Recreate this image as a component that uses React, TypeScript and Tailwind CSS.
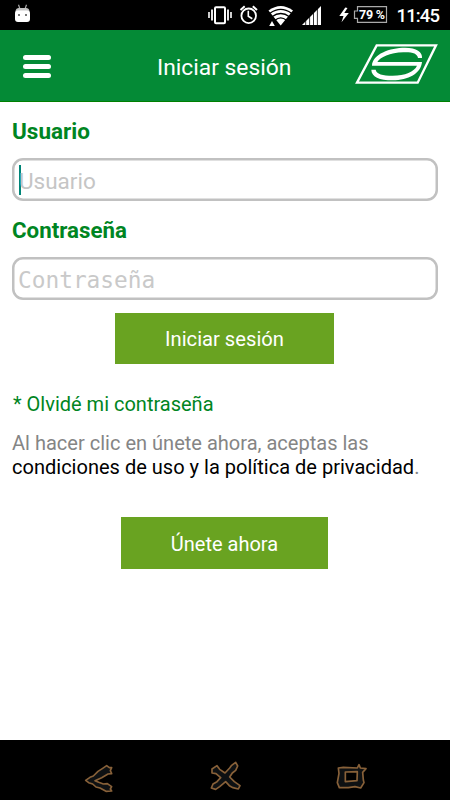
import React from 'react';

function StatusBar() {
  return (
    <div className="flex h-[30px] w-full bg-black">
      <svg width="450" height="30" viewBox="0 0 450 30" fill="none">
        <g fill="#fff">
          <path d="M18.5 4.8l1.4 4M26.5 4.8l-1.4 4" stroke="#aaa" strokeWidth="1.2" />
          <path d="M15.5 13V11Q16 8 19 8h7q3 0 3.5 3v2z" fill="#c4c4c4" />
          <rect x="15" y="10.5" width="15" height="11.5" rx="3" />
          <rect x="18" y="14" width="2" height="2" fill="#777" />
          <rect x="25" y="14" width="2" height="2" fill="#777" />
        </g>
        <g stroke="#fff">
          <rect x="215" y="7.2" width="10" height="16" rx="1" strokeWidth="2" />
          <path d="M212 9.5v11M228 9.5v11" strokeWidth="1.8" />
          <path d="M209 12v6M231 12v6" strokeWidth="1.6" />
          <circle cx="248.7" cy="15.8" r="7.3" strokeWidth="1.8" />
          <path d="M248.3 10.8v5.5l4 2.5" strokeWidth="1.6" />
          <path d="M240.5 10l4.2-3.8M257 10l-4.2-3.8" strokeWidth="2" />
        </g>
        <path d="M268.5 10.5Q280.7 1.5 293 10.5L280.7 25.5z" fill="#fff" />
        <path d="M270 13.3Q280.7 5.5 291.5 13.3M272 16.8Q280.7 10.2 289.5 16.8M275 20.3Q280.7 15.6 286.5 20.3" stroke="#000" strokeWidth="1.3" />
        <path d="M268 27v-6h6.5v6z" fill="#000" />
        <path d="M269.2 26l2.8-5 2.8 5z" fill="#fff" />
        <path d="M302 25L321 6v19z" fill="#fff" />
        <path d="M305.7 17v9M309.6 13v13M313.5 9v17M317.4 6v20" stroke="#000" strokeWidth="0.8" />
        <path d="M345.3 7.5L339.3 16h4.2l-2 6.3 7.3-9.3h-4.5l3.2-5z" fill="#fff" />
        <path d="M357.5 6.7h29v15.6h-29v-4h-3v-7.3h3z" stroke="#aaa" strokeWidth="1.2" />
        <text x="359" y="19" fill="#fff" fontFamily="Roboto, sans-serif" fontSize="12.5" fontWeight="700" textLength="26">79 %</text>
        <text x="396.5" y="22" fill="#fff" fontFamily="Roboto, sans-serif" fontSize="18.5" fontWeight="500" textLength="43.5">11:45</text>
      </svg>
    </div>
  );
}

function Logo() {
  return (
    <svg width="110" height="72" viewBox="0 0 330 216" fill="none">
      <path d="M110 46H288L233 158H51z" stroke="#fff" strokeWidth="7" />
      <path
        d="M96 107C97 72 150 53 195 53C230 53 248 66 246 84H234C232 71 218 66 190 67C150 68 120 82 112 96H246C243 130 205 151 158 151C118 151 94 140 94 119H107C109 132 128 137 158 137C195 137 223 125 231 107Z"
        fill="#fff"
      />
    </svg>
  );
}

function Header() {
  return (
    <header className="flex h-[72px] w-full items-start border-b border-[#008000] bg-[#048a36]">
      <div className="ml-[23px] mt-[25px] flex w-7 flex-col gap-1">
        <i className="h-[5px] rounded-full bg-white" />
        <i className="h-[5px] rounded-full bg-white" />
        <i className="h-[5px] rounded-full bg-white" />
      </div>
      <h1 className="ml-[106px] mt-[23px] w-[183px] whitespace-nowrap text-[22.8px] leading-[30px] text-white">Iniciar sesión</h1>
      <Logo />
    </header>
  );
}

function NavBar() {
  return (
    <nav className="h-[60px] w-full bg-black">
      <svg width="450" height="60" viewBox="0 0 1350 180" fill="#0e1113" stroke="#886139" strokeWidth="5" strokeLinejoin="round">
        <path transform="translate(210 0)" d="M47 121L60 112L70 108L84 94L98 85L110 77L118 83L125 83L121 92L125 101L114 102L95 113L75 122L86 127L100 132L112 131L125 140L121 147L125 153L108 154L90 144L78 141L68 132L56 128Z" />
        <path transform="translate(585 0)" d="M51 87L66 77L74 88L90 99L104 84L110 76L122 67L128 78L122 91L112 99L104 111L118 125L135 137L130 147L114 143L103 137L92 125L74 140L62 148L49 144L54 132L66 125L77 113L63 101L51 99Z" />
        <path transform="translate(960 0)" d="M55 84L70 82L112 84L117 74L121 84L138 86L128 97L130 120L132 128L122 144L105 140L85 143L58 143L52 128L57 100Z" />
        <path transform="translate(960 0)" d="M76 96L112 95L111 122L76 125Z" fill="#000" />
      </svg>
    </nav>
  );
}

export default function App() {
  return (
    <div className="flex h-[800px] w-[450px] flex-col overflow-hidden bg-white font-[Roboto,sans-serif]">
      <StatusBar />
      <Header />
      <main className="flex flex-1 flex-col px-[13px] pt-[15px]">
        <label className="-ml-px h-7 text-[22.5px] leading-[29px] font-bold text-[#008522]">Usuario</label>
        <div className="mt-[13px] -mx-px flex h-[43px] items-center rounded-[11px] pl-[7px] shadow-[inset_0_0_0_2.5px_#c1c1c1]">
          <span className="h-[30px] w-[2px] bg-[#008577]" />
          <span className="-ml-[2px] mt-[3px] text-[22.5px] leading-[30px] text-[#c5c5c5]">Usuario</span>
        </div>
        <label className="-ml-px mt-[15px] h-7 text-[22.3px] leading-[29px] font-bold text-[#008522]">Contraseña</label>
        <div className="mt-[13px] -mx-px flex h-[43px] items-center rounded-[11px] pl-[6px] shadow-[inset_0_0_0_2.5px_#c1c1c1]">
          <span className="mt-[3px] font-['DejaVu_Sans_Mono',monospace] text-[22.8px] leading-[30px] text-[#c9c9c9]">Contraseña</span>
        </div>
        <button className="ml-[102px] mt-[13px] h-[51px] w-[219px] bg-[#69a321] text-[20.2px] leading-[30px] text-white">Iniciar sesión</button>
        <a className="mt-[26px] h-7 text-[20px] leading-7 text-[#008522]">* Olvidé mi contraseña</a>
        <p className="mt-[13px] -ml-px h-12 whitespace-nowrap text-[20.05px] leading-6 text-[#858585]">
          Al hacer clic en únete ahora, aceptas las<br />
          <span className="text-black">condiciones de uso y la política de privacidad</span>.
        </p>
        <button className="ml-[108px] mt-[38px] h-[52px] w-[207px] bg-[#69a321] pt-px text-[20px] leading-[30px] text-white">Únete ahora</button>
      </main>
      <NavBar />
    </div>
  );
}
